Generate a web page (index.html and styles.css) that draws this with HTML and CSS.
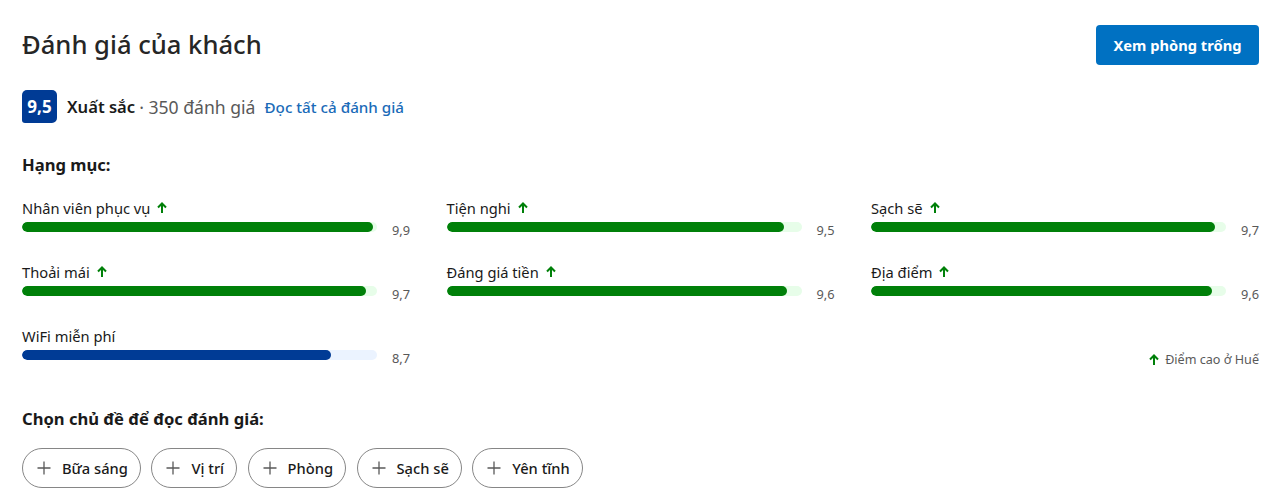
FILE: index.html
```html
<!DOCTYPE html>
<html lang="vi">
<head>
<meta charset="utf-8">
<title>Đánh giá của khách</title>
<link rel="stylesheet" href="styles.css">
</head>
<body>
<div class="page">
  <div class="header">
    <h2 class="title">Đánh giá của khách</h2>
    <button class="btn-primary">Xem phòng trống</button>
  </div>
  <div class="rating">
    <div class="badge">9,5</div>
    <span class="rating-word">Xuất sắc</span>
    <span class="rating-count">· 350 đánh giá</span>
    <a class="rating-link" href="#">Đọc tất cả đánh giá</a>
  </div>

  <h3 class="section-title">Hạng mục:</h3>
  <div class="grid">
    <div class="cat">
      <div class="cat-label">Nhân viên phục vụ <svg class="up" viewBox="0 0 12 12"><path d="M6 11V2M2 5.5L6 1.5L10 5.5" /></svg></div>
      <div class="cat-row"><div class="track green"><div class="fill" style="width:99%"></div></div><span class="score">9,9</span></div>
    </div>
    <div class="cat">
      <div class="cat-label">Tiện nghi <svg class="up" viewBox="0 0 12 12"><path d="M6 11V2M2 5.5L6 1.5L10 5.5" /></svg></div>
      <div class="cat-row"><div class="track green"><div class="fill" style="width:95%"></div></div><span class="score">9,5</span></div>
    </div>
    <div class="cat">
      <div class="cat-label">Sạch sẽ <svg class="up" viewBox="0 0 12 12"><path d="M6 11V2M2 5.5L6 1.5L10 5.5" /></svg></div>
      <div class="cat-row"><div class="track green"><div class="fill" style="width:97%"></div></div><span class="score">9,7</span></div>
    </div>
    <div class="cat">
      <div class="cat-label">Thoải mái <svg class="up" viewBox="0 0 12 12"><path d="M6 11V2M2 5.5L6 1.5L10 5.5" /></svg></div>
      <div class="cat-row"><div class="track green"><div class="fill" style="width:97%"></div></div><span class="score">9,7</span></div>
    </div>
    <div class="cat">
      <div class="cat-label">Đáng giá tiền <svg class="up" viewBox="0 0 12 12"><path d="M6 11V2M2 5.5L6 1.5L10 5.5" /></svg></div>
      <div class="cat-row"><div class="track green"><div class="fill" style="width:96%"></div></div><span class="score">9,6</span></div>
    </div>
    <div class="cat">
      <div class="cat-label">Địa điểm <svg class="up" viewBox="0 0 12 12"><path d="M6 11V2M2 5.5L6 1.5L10 5.5" /></svg></div>
      <div class="cat-row"><div class="track green"><div class="fill" style="width:96%"></div></div><span class="score">9,6</span></div>
    </div>
    <div class="cat">
      <div class="cat-label">WiFi miễn phí</div>
      <div class="cat-row"><div class="track blue"><div class="fill" style="width:87%"></div></div><span class="score">8,7</span></div>
    </div>
    <div class="cat empty"></div>
    <div class="cat note-cell">
      <span class="note"><svg class="up" viewBox="0 0 12 12"><path d="M6 11V2M2 5.5L6 1.5L10 5.5" /></svg> Điểm cao ở Huế</span>
    </div>
  </div>

  <h3 class="section-title topics-title">Chọn chủ đề để đọc đánh giá:</h3>
  <div class="chips">
    <button class="chip"><svg class="plus" viewBox="0 0 14 14"><path d="M7 0.5V13.5M0.5 7H13.5"/></svg>Bữa sáng</button>
    <button class="chip"><svg class="plus" viewBox="0 0 14 14"><path d="M7 0.5V13.5M0.5 7H13.5"/></svg>Vị trí</button>
    <button class="chip"><svg class="plus" viewBox="0 0 14 14"><path d="M7 0.5V13.5M0.5 7H13.5"/></svg>Phòng</button>
    <button class="chip"><svg class="plus" viewBox="0 0 14 14"><path d="M7 0.5V13.5M0.5 7H13.5"/></svg>Sạch sẽ</button>
    <button class="chip"><svg class="plus" viewBox="0 0 14 14"><path d="M7 0.5V13.5M0.5 7H13.5"/></svg>Yên tĩnh</button>
  </div>
</div>
</body>
</html>
```

FILE: styles.css
```css
* { box-sizing: border-box; }
html, body { margin: 0; padding: 0; background: #fff; }
body {
  font-family: "Noto Sans", "Open Sans", sans-serif;
  color: #1a1a1a;
  font-size: 14.7px;
}
.page {
  padding: 25px 26px 0 22px;
}
.header {
  display: flex;
  justify-content: space-between;
  align-items: center;
  height: 40px;
}
.title {
  margin: 0;
  font-size: 25.6px;
  font-weight: 500;
  line-height: 32px;
  color: #262626;
}
.btn-primary {
  height: 40px;
  width: 163px;
  border: none;
  border-radius: 4px;
  background: #0071c2;
  color: #fff;
  font-family: inherit;
  font-size: 14.7px;
  font-weight: 700;
  padding: 0 8px;
}
.rating {
  display: flex;
  align-items: center;
  margin-top: 25px;
  height: 33px;
}
.badge {
  width: 35px;
  height: 33px;
  border-radius: 5px 5px 5px 3px;
  background: #003b95;
  color: #fff;
  font-size: 17px;
  font-weight: 700;
  display: flex;
  align-items: center;
  justify-content: center;
  margin-right: 10px;
}
.rating-word {
  font-size: 16.6px;
  font-weight: 600;
  color: #1a1a1a;
}
.rating-count {
  font-size: 17.6px;
  color: #595959;
  margin-left: 4px;
}
.rating-link {
  margin-left: 9px;
  font-size: 15.2px;
  font-weight: 500;
  color: #1a6bb8;
  text-decoration: none;
}
.section-title {
  margin: 30px 0 0;
  font-size: 16.6px;
  font-weight: 700;
  line-height: 24px;
}
.grid {
  display: grid;
  grid-template-columns: repeat(3, 388px);
  column-gap: 36.5px;
  row-gap: 30px;
  margin-top: 21px;
}
.cat-label {
  display: flex;
  align-items: center;
  line-height: 20px;
  height: 20px;
  font-size: 14.7px;
  color: #1a1a1a;
  gap: 6px;
}
.up {
  width: 12px;
  height: 12px;
  fill: none;
  stroke: #008009;
  stroke-width: 2;
  stroke-linecap: butt;
  stroke-linejoin: miter;
}
.cat-row {
  display: flex;
  align-items: center;
  margin-top: 4px;
  height: 10px;
}
.track {
  width: 355px;
  height: 10px;
  border-radius: 5px;
  overflow: hidden;
}
.track.green { background: #e7fde9; }
.track.green .fill { background: #008009; }
.track.blue { background: #ebf3ff; }
.track.blue .fill { background: #003b95; }
.fill {
  height: 100%;
  border-radius: 5px;
}
.score {
  flex: 1;
  text-align: right;
  font-size: 12.8px;
  color: #595959;
  position: relative;
  top: 3px;
}
.note-cell {
  display: flex;
  justify-content: flex-end;
  align-items: flex-end;
}
.note {
  display: flex;
  align-items: center;
  gap: 5px;
  font-size: 12.6px;
  color: #595959;
  line-height: 16px;
  margin-bottom: -8px;
}
.topics-title {
  margin-top: 47px;
}
.chips {
  display: flex;
  gap: 10.5px;
  margin-top: 17px;
}
.chip {
  display: flex;
  align-items: center;
  height: 40px;
  border: 1px solid #868686;
  border-radius: 20px;
  background: #fff;
  padding: 0 12px 0 14px;
  font-family: inherit;
  font-size: 14.7px;
  font-weight: 500;
  color: #1a1a1a;
  gap: 11px;
}
.plus {
  width: 14px;
  height: 14px;
  fill: none;
  stroke: #595959;
  stroke-width: 1.3;
}
```
